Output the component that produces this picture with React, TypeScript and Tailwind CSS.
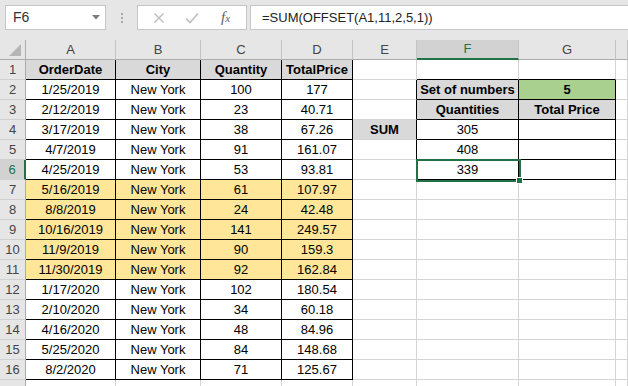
import React from "react";

const font = { fontFamily: '"Liberation Sans", Arial, sans-serif' };

const data = [
  ["1/25/2019", "New York", "100", "177"],
  ["2/12/2019", "New York", "23", "40.71"],
  ["3/17/2019", "New York", "38", "67.26"],
  ["4/7/2019", "New York", "91", "161.07"],
  ["4/25/2019", "New York", "53", "93.81"],
  ["5/16/2019", "New York", "61", "107.97"],
  ["8/8/2019", "New York", "24", "42.48"],
  ["10/16/2019", "New York", "141", "249.57"],
  ["11/9/2019", "New York", "90", "159.3"],
  ["11/30/2019", "New York", "92", "162.84"],
  ["1/17/2020", "New York", "102", "180.54"],
  ["2/10/2020", "New York", "34", "60.18"],
  ["4/16/2020", "New York", "48", "84.96"],
  ["5/25/2020", "New York", "84", "148.68"],
  ["8/2/2020", "New York", "71", "125.67"],
];

const widths = ["w-[90px]", "w-[85px]", "w-[81px]", "w-[71px]", "w-[64px]", "w-[102px]", "w-[97px]", "w-[12px]"];
const letters = ["A", "B", "C", "D", "E", "F", "G", ""];

type CellDef = { t?: string; bg: string; r: string; b: string; bold?: boolean };

const GRID_R = "border-r-[#d4d4d4]";
const GRID_B = "border-b-[#d4d4d4]";
const BLACK_R = "border-r-black";
const BLACK_B = "border-b-black";

function cellsFor(row: number): CellDef[] {
  const out: CellDef[] = [];
  // A-D
  for (let c = 0; c < 4; c++) {
    if (row === 1) {
      out.push({ t: ["OrderDate", "City", "Quantity", "TotalPrice"][c], bg: "bg-[#d9d9d9]", r: BLACK_R, b: BLACK_B, bold: true });
    } else if (row <= 16) {
      const yellow = row >= 7 && row <= 11;
      out.push({ t: data[row - 2][c], bg: yellow ? "bg-[#ffe699]" : "bg-white", r: BLACK_R, b: BLACK_B });
    } else {
      out.push({ bg: "bg-white", r: GRID_R, b: GRID_B });
    }
  }
  const inBox = row >= 2 && row <= 6;
  // E
  out.push({
    t: row === 4 ? "SUM" : undefined,
    bg: row === 4 ? "bg-[#d9d9d9]" : "bg-white",
    r: inBox ? BLACK_R : GRID_R,
    b: GRID_B,
    bold: row === 4,
  });
  // F
  const fText: Record<number, string> = { 2: "Set of numbers", 3: "Quantities", 4: "305", 5: "408", 6: "339" };
  out.push({
    t: fText[row],
    bg: row === 2 || row === 3 ? "bg-[#d9d9d9]" : "bg-white",
    r: inBox ? BLACK_R : GRID_R,
    b: row === 1 || inBox ? BLACK_B : GRID_B,
    bold: row === 2 || row === 3,
  });
  // G
  const gText: Record<number, string> = { 2: "5", 3: "Total Price" };
  out.push({
    t: gText[row],
    bg: row === 2 ? "bg-[#a9d08e]" : row === 3 ? "bg-[#d9d9d9]" : "bg-white",
    r: inBox ? BLACK_R : GRID_R,
    b: row === 1 || inBox ? BLACK_B : GRID_B,
    bold: row === 2 || row === 3,
  });
  // H
  out.push({ bg: "bg-white", r: GRID_R, b: GRID_B });
  return out;
}

const rowNums = Array.from({ length: 17 }, (_, i) => i + 1);

export default function App() {
  return (
    <div className="w-[628px] h-[386px] overflow-hidden bg-white text-[13px] text-black" style={font}>
      {/* formula bar */}
      <div className="h-[40px] bg-[#e6e6e6] flex items-start pt-[5px] pl-[5px]">
        <div className="w-[101px] h-[25px] bg-white border border-[#c6c6c6] flex items-center justify-between pl-[7px] pr-[5px]">
          <span className="text-[14px] text-[#333]">F6</span>
          <svg width="8" height="5" viewBox="0 0 8 5">
            <path d="M0 0 L8 0 L4 4.5 Z" fill="#7a7a7a" />
          </svg>
        </div>
        <div className="w-[31px] h-[25px] flex flex-col items-center justify-center gap-[2px]">
          <span className="w-[2px] h-[2px] bg-[#a8a8a8]" />
          <span className="w-[2px] h-[2px] bg-[#a8a8a8]" />
          <span className="w-[2px] h-[2px] bg-[#a8a8a8]" />
        </div>
        <div className="w-[110px] h-[25px] bg-white border border-[#c6c6c6] flex items-center pl-[15px]">
          <svg width="12" height="12" viewBox="0 0 12 12">
            <path d="M1.5 1.5 L10.5 10.5 M10.5 1.5 L1.5 10.5" stroke="#bdbdbd" strokeWidth="1.4" />
          </svg>
          <svg className="ml-[20px]" width="14" height="12" viewBox="0 0 14 12">
            <path d="M1 6.5 L5 10.5 L13 1.5" stroke="#bdbdbd" strokeWidth="1.6" fill="none" />
          </svg>
          <span className="ml-[22px] italic text-[#5f5f5f] text-[15px] leading-none" style={{ fontFamily: '"Liberation Serif", serif' }}>
            f<span className="text-[11px]">x</span>
          </span>
        </div>
        <div className="ml-[3px] flex-1 h-[25px] bg-white border border-[#c6c6c6] border-r-0 flex items-center pl-[11px]">
          <span className="text-[13px] text-[#222]">=SUM(OFFSET(A1,11,2,5,1))</span>
        </div>
      </div>

      {/* sheet */}
      <div className="relative">
        {/* column headers */}
        <div className="flex h-[20px] bg-[#e6e6e6]">
          <div className="w-[26px] h-full border-r border-b border-[#ababab] flex items-end justify-end pr-[4px] pb-[3px]">
            <svg width="12" height="12" viewBox="0 0 12 12">
              <path d="M12 0 L12 12 L0 12 Z" fill="#b5b5b5" />
            </svg>
          </div>
          {letters.map((l, i) => {
            const sel = l === "F";
            return (
              <div
                key={i}
                className={`${widths[i]} h-full flex items-center justify-center border-r border-r-[#c4c4c4] ${
                  sel ? "bg-[#d2d2d2] text-[#217346] border-b-2 border-b-[#217346]" : "text-[#444] border-b border-b-[#ababab]"
                }`}
              >
                {l}
              </div>
            );
          })}
        </div>

        {/* rows */}
        {rowNums.map((row) => {
          const sel = row === 6;
          return (
            <div key={row} className="flex h-[20px]">
              <div
                className={`w-[26px] h-full flex items-center justify-center border-b border-b-[#d0d0d0] ${
                  sel ? "bg-[#d2d2d2] text-[#217346] border-r-2 border-r-[#217346]" : "bg-[#e6e6e6] text-[#444] border-r border-r-[#ababab]"
                }`}
              >
                {row < 17 ? row : null}
              </div>
              {cellsFor(row).map((c, i) => (
                <div
                  key={i}
                  className={`${widths[i]} h-full border-r border-b ${c.r} ${c.b} ${c.bg} flex items-center justify-center whitespace-nowrap overflow-hidden ${
                    c.bold ? "font-bold" : ""
                  }`}
                >
                  {c.t}
                </div>
              ))}
            </div>
          );
        })}

        {/* selection F6 */}
        <div className="absolute left-[416px] top-[119px] w-[105px] h-[23px] border-2 border-[#217346] pointer-events-none" />
        <div className="absolute left-[516px] top-[137px] w-[7px] h-[7px] bg-[#217346] border border-white" />
      </div>
    </div>
  );
}
